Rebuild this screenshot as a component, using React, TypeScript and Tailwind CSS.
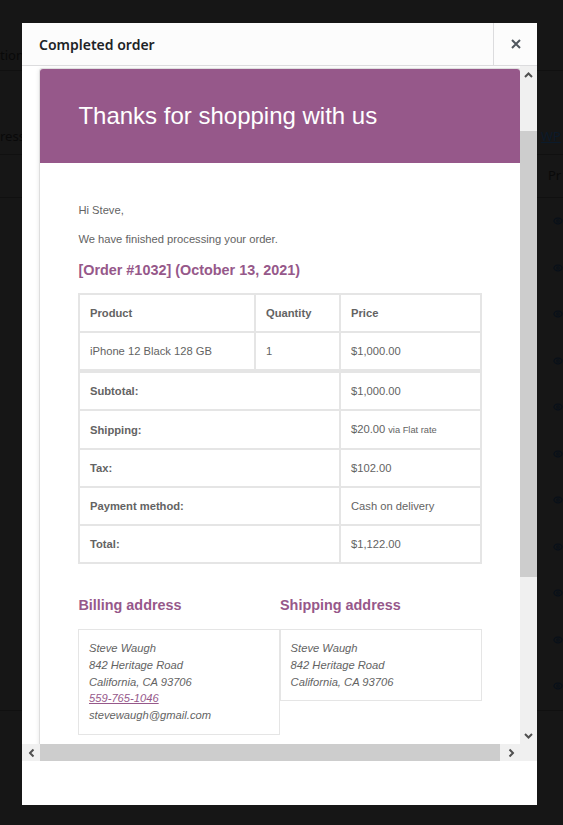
import React from "react";
import { Eye } from "lucide-react";

const items = [{ name: "iPhone 12 Black 128 GB", qty: 1, price: "$1,000.00" }];

const totals = [
  { label: "Subtotal:", value: "$1,000.00" },
  { label: "Shipping:", value: "$20.00", note: "via Flat rate" },
  { label: "Tax:", value: "$102.00" },
  { label: "Payment method:", value: "Cash on delivery" },
  { label: "Total:", value: "$1,122.00" },
];

const Chevron = ({ dir }: { dir: "up" | "down" | "left" | "right" }) => {
  const rot = { up: "rotate-0", down: "rotate-180", left: "-rotate-90", right: "rotate-90" }[dir];
  return (
    <svg width="9" height="6" viewBox="0 0 9 6" className={rot}>
      <path d="M1 5 L4.5 1.5 L8 5" fill="none" stroke="#505050" strokeWidth="2" />
    </svg>
  );
};

// Dimmed admin page behind the modal
const BackdropPage = () => (
  <div className="flex flex-col whitespace-nowrap font-['Noto_Sans',sans-serif] text-[13px] text-[#090909]">
    <div className="flex h-[71px] items-end border-b border-[#101010] pb-[5px]">
      <span>tion</span>
    </div>
    <div className="flex h-[84px] items-end border-b border-[#101010] pb-[8px]">
      <span className="w-[541px] overflow-hidden">ress to</span>
      <span className="text-[#0b1a2a] underline">WP</span>
    </div>
    <div className="flex h-[43px] items-center border-b border-[#101010]">
      <span className="ml-[548px]">Pr</span>
    </div>
    {Array.from({ length: 11 }).map((_, i) => (
      <div key={i} className="flex h-[46.5px] items-center">
        <Eye className="ml-[553px] h-[16px] w-[16px] text-[#08101a]" strokeWidth={2.5} />
      </div>
    ))}
    <div className="h-px bg-[#101010]" />
  </div>
);

const cell = "border border-[#e5e5e5] p-[9.6px] text-left align-middle";

const EmailPreview = () => (
  <div className="ml-[17px] mt-[2px] w-[482px] shrink-0 rounded-t-[3px] border border-[#dedede] bg-white shadow-[0_1px_4px_rgba(0,0,0,0.1)] font-['Liberation_Sans',Arial,sans-serif]">
    <div className="rounded-t-[3px] bg-[#96588a] px-[38.4px] py-[28.8px]">
      <h1 className="text-[24px] font-normal leading-[36px] text-white">Thanks for shopping with us</h1>
    </div>
    <div className="px-[38.4px] pb-[38.4px] pt-[39px] text-[11.2px] leading-[16.8px] text-[#636363]">
      <p className="mb-[12.8px]">Hi Steve,</p>
      <p className="mb-[12.8px]">We have finished processing your order.</p>
      <h2 className="mb-[14px] text-[14.4px] font-bold leading-[18.7px] text-[#96588a]">
        [Order #1032] (October 13, 2021)
      </h2>
      <table className="mb-[32px] w-full table-fixed border-separate border-spacing-0 border border-[#e5e5e5]">
        <colgroup>
          <col className="w-[176px]" />
          <col className="w-[85px]" />
          <col />
        </colgroup>
        <thead>
          <tr>
            <th className={`${cell} font-bold`}>Product</th>
            <th className={`${cell} font-bold`}>Quantity</th>
            <th className={`${cell} font-bold`}>Price</th>
          </tr>
        </thead>
        <tbody>
          {items.map((it) => (
            <tr key={it.name}>
              <td className={cell}>{it.name}</td>
              <td className={cell}>{it.qty}</td>
              <td className={cell}>{it.price}</td>
            </tr>
          ))}
        </tbody>
        <tfoot>
          {totals.map((t, i) => (
            <tr key={t.label}>
              <th colSpan={2} className={`${cell} font-bold ${i === 0 ? "border-t-[3.2px]" : ""}`}>
                {t.label}
              </th>
              <td className={`${cell} ${i === 0 ? "border-t-[3.2px]" : ""}`}>
                {t.value}
                {t.note && <small className="ml-[3px] text-[9.3px]">{t.note}</small>}
              </td>
            </tr>
          ))}
        </tfoot>
      </table>
      <div className="flex">
        <div className="w-1/2">
          <h2 className="mb-[14.4px] text-[14.4px] font-bold leading-[18.7px] text-[#96588a]">Billing address</h2>
          <address className="border border-[#e5e5e5] p-[9.6px] italic">
            Steve Waugh
            <br />
            842 Heritage Road
            <br />
            California, CA 93706
            <br />
            <a className="text-[#96588a] underline">559-765-1046</a>
            <br />
            stevewaugh@gmail.com
          </address>
        </div>
        <div className="w-1/2">
          <h2 className="mb-[14.4px] text-[14.4px] font-bold leading-[18.7px] text-[#96588a]">Shipping address</h2>
          <address className="border border-[#e5e5e5] p-[9.6px] italic">
            Steve Waugh
            <br />
            842 Heritage Road
            <br />
            California, CA 93706
          </address>
        </div>
      </div>
    </div>
  </div>
);

export default function App() {
  return (
    <div className="relative h-[825px] w-[563px] overflow-hidden bg-[#161616]">
      <BackdropPage />

      <div className="absolute left-[22px] top-[23px] flex h-[782px] w-[515px] flex-col bg-white">
        {/* Header */}
        <div className="flex h-[43px] shrink-0 items-stretch border-b border-[#dcdcde] bg-[#fcfcfc]">
          <h1 className="flex flex-1 items-center pl-[17px] font-['Noto_Sans',sans-serif] text-[14px] font-semibold text-[#1d2327]">
            Completed order
          </h1>
          <button className="flex w-[44px] items-center justify-center border-l border-[#dcdcde]">
            <svg width="10" height="10" viewBox="0 0 10 10">
              <path d="M1 1 L9 9 M9 1 L1 9" stroke="#50575e" strokeWidth="2" />
            </svg>
          </button>
        </div>

        {/* Preview frame */}
        <div className="flex h-[695px] shrink-0 flex-col">
          <div className="flex h-[678px]">
            <div className="flex flex-1 flex-col overflow-hidden bg-white">
              <EmailPreview />
            </div>
            <div className="flex w-[17px] flex-col bg-[#f0f0f0]">
              <div className="flex h-[17px] items-center justify-center">
                <Chevron dir="up" />
              </div>
              <div className="flex-1 pt-[48px]">
                <div className="h-[446px] bg-[#cdcdcd]" />
              </div>
              <div className="flex h-[17px] items-center justify-center">
                <Chevron dir="down" />
              </div>
            </div>
          </div>
          <div className="flex h-[17px] bg-[#f0f0f0]">
            <div className="flex w-[18px] items-center justify-center">
              <Chevron dir="left" />
            </div>
            <div className="w-[460px] bg-[#cdcdcd]" />
            <div className="flex-1" />
            <div className="flex w-[17px] items-center justify-center">
              <Chevron dir="right" />
            </div>
            <div className="w-[17px]" />
          </div>
        </div>

        {/* Footer */}
        <div className="flex-1 bg-white" />
      </div>
    </div>
  );
}
